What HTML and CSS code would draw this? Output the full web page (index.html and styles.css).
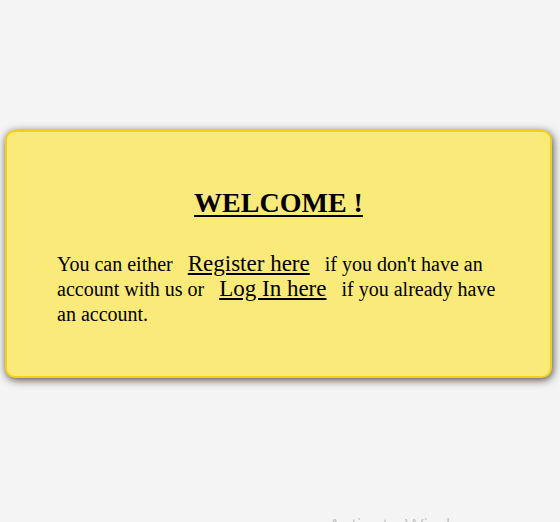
FILE: index.html
```html
<!DOCTYPE html>
<html lang="en">
<head>
<meta charset="utf-8">
<title>Welcome</title>
<link rel="stylesheet" href="styles.css">
</head>
<body>
  <main class="card">
    <h1 class="title">WELCOME !</h1>
    <p class="text">You can either <a class="link" href="#">Register here</a> if you don't have an account with us or <a class="link" href="#">Log In here</a> if you already have an account.</p>
  </main>
  <div class="watermark">Activate Windows</div>
</body>
</html>
```
FILE: styles.css
```css
html, body {
  margin: 0;
  padding: 0;
}
body {
  background: #f4f4f4;
  font-family: "Liberation Serif", "Times New Roman", serif;
  color: #000;
  height: 522px;
  overflow: hidden;
}
.card {
  box-sizing: border-box;
  width: 547px;
  margin: 130px 0 0 5px;
  padding: 55px 50px 49px;
  background: #f9ea7a;
  border: 2px solid #f5cf14;
  border-radius: 10px;
  box-shadow: 1px 2px 8px rgba(0, 0, 0, 0.7);
}
.title {
  margin: 0 0 33px;
  font-size: 28px;
  line-height: 32px;
  font-weight: bold;
  text-align: center;
  text-decoration: underline;
  text-underline-offset: 3px;
  text-decoration-thickness: 2px;
}
.text {
  margin: 0;
  font-size: 20px;
  line-height: 25px;
}
.link {
  color: #000;
  font-size: 23px;
  line-height: 20px;
  margin: 0 10px;
  text-decoration: underline;
}
.watermark {
  position: fixed;
  left: 328px;
  top: 515px;
  font-family: "Liberation Sans", Arial, sans-serif;
  font-size: 20px;
  color: #cbcbcb;
  white-space: nowrap;
}
```
